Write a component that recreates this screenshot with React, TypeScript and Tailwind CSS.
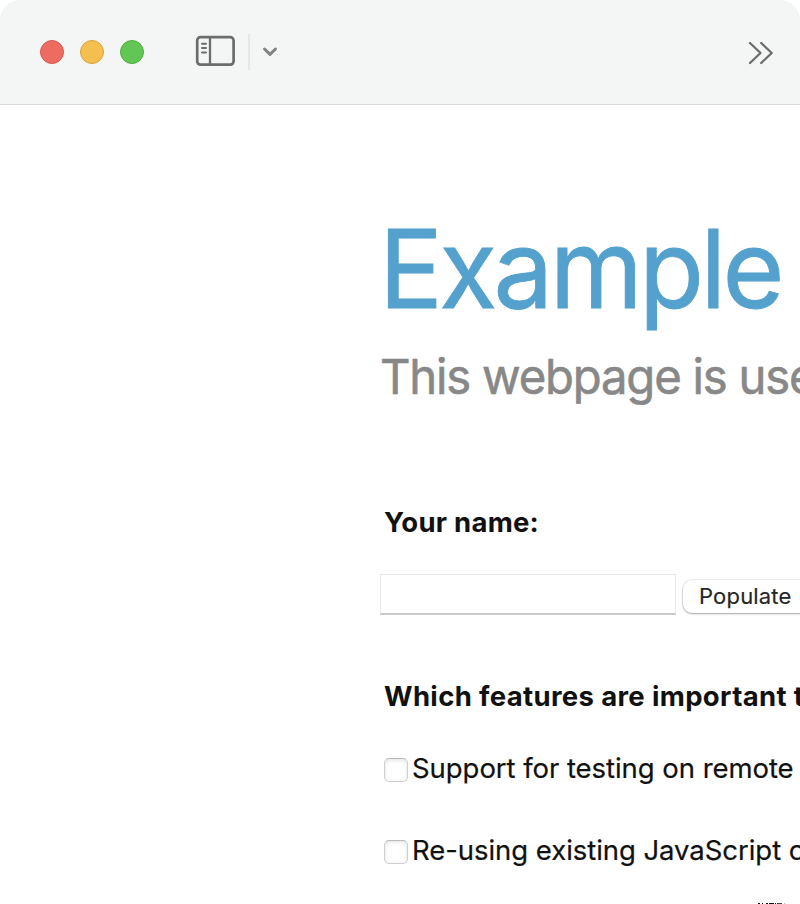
function TitleBar() {
  return (
    <header className="flex h-[105px] shrink-0 items-start rounded-t-[20px] border-b border-[#d8d9d9] bg-[#f4f6f5] pt-[34px] pr-[25px] pl-10">
      <div className="flex h-9 items-center gap-4">
        <span className="size-6 rounded-full border border-[#d9584e] bg-[#ed6b60]" />
        <span className="size-6 rounded-full border border-[#d8a243] bg-[#f5bf4f]" />
        <span className="size-6 rounded-full border border-[#53ac43] bg-[#62c655]" />
      </div>
      <svg className="mt-[1px] ml-[51px] h-8 w-10 shrink-0" viewBox="0 0 40 32" fill="none" stroke="#6b6d6c" strokeLinecap="round">
        <rect x="2.2" y="2.2" width="36.4" height="27.5" rx="3.4" strokeWidth="2.7" />
        <path d="M15 2.5V29.5" strokeWidth="2.3" />
        <path d="M7 8.7H11M7 13H11M7 17.400H11" strokeWidth="2" />
      </svg>
      <span className="ml-[13px] h-9 w-[2px] bg-[#e5e7e6]" />
      <svg className="mt-[10px] ml-[12px] h-4 w-4" viewBox="0 0 16 16" fill="none" stroke="#818385" strokeWidth="3" strokeLinecap="round" strokeLinejoin="round">
        <path d="M2.5 5L8 10.3L13.500 5" />
      </svg>
      <svg className="mt-[6px] ml-auto h-[26px] w-[28px]" viewBox="0 0 28 26" fill="none" stroke="#6b6d6c" strokeWidth="2.3" strokeLinecap="round" strokeLinejoin="round">
        <path d="M3 3L13.500 13L3 23M14.200 3L24.700 13L14.200 23" />
      </svg>
    </header>
  );
}

function Feature({ label }: { label: string }) {
  return (
    <label className="flex h-[82px] items-center gap-1 pl-1 text-[27.5px] leading-none tracking-[-0.05px] text-[#111] [-webkit-text-stroke:0.2px_#111]">
      <span className="mt-[1px] size-6 shrink-0 rounded-[5px] border border-[#cfcfcf] border-t-[#b9b9b9] bg-white shadow-[inset_0_1px_4px_rgba(0,0,0,0.13)]" />
      <span>{label}</span>
    </label>
  );
}

export default function App() {
  return (
    <div className="flex h-[904px] w-[800px] flex-col overflow-hidden bg-white font-['Inter',sans-serif] whitespace-nowrap">
      <TitleBar />
      <main className="flex flex-col pl-[380px]">
        <h1 className="mt-[103px] flex h-[120px] w-[420px] origin-left scale-x-[0.975] items-center text-[109px] leading-none font-normal tracking-[-3.75px] text-[#54a1cd] [-webkit-text-stroke:0.9px_#54a1cd]"><span className="-ml-[1px]">Example</span></h1>
        <p className="mt-[19px] flex h-[60px] w-[420px] origin-left scale-x-[0.975] items-center text-[48.5px] leading-none tracking-[-1.25px] text-[#888] [-webkit-text-stroke:0.6px_#888]">This webpage is used</p>
        <p className="mt-[96px] flex h-10 items-center pl-[4px] text-[27.5px] leading-none font-bold tracking-[0.25px] text-[#111]">Your name:</p>
        <div className="mt-[31px] flex h-[41px] items-start">
          <span className="h-[41px] w-[296px] shrink-0 border border-b-2 border-[#e8e8e8] border-b-[#c9c9c9] bg-white" />
          <button className="mt-[6px] ml-[7px] flex h-[33px] w-[125px] shrink-0 items-center rounded-[9px] bg-white pb-[2px] pl-4 text-[22px] leading-none tracking-[0.18px] text-[#262626] shadow-[0_0_0_1px_rgba(0,0,0,0.07),0_1px_2px_rgba(0,0,0,0.3)] [-webkit-text-stroke:0.15px_#262626]">Populate</button>
        </div>
        <p className="mt-[62px] flex h-10 items-center pl-[4px] text-[27.5px] leading-none font-bold tracking-[0.35px] text-[#111]">Which features are important to</p>
        <div className="mt-[11px]">
          <Feature label="Support for testing on remote devices" />
          <Feature label="Re-using existing JavaScript code" />
        </div>
        <svg className="mt-[11px] ml-[377px] h-[1px] w-[29px] shrink-0" viewBox="0 0 29 1" shapeRendering="crispEdges">
          <path d="M1 0h2v1h-2zM5 0h1v1h-1zM9 0h2v1h-2zM12 0h5v1h-5zM18 0h1v1h-1z" fill="#111" />
          <path d="M20 0h5v1h-5z" fill="#444" />
          <path d="M27 0h1v1h-1z" fill="#bbb" />
        </svg>
      </main>
    </div>
  );
}
